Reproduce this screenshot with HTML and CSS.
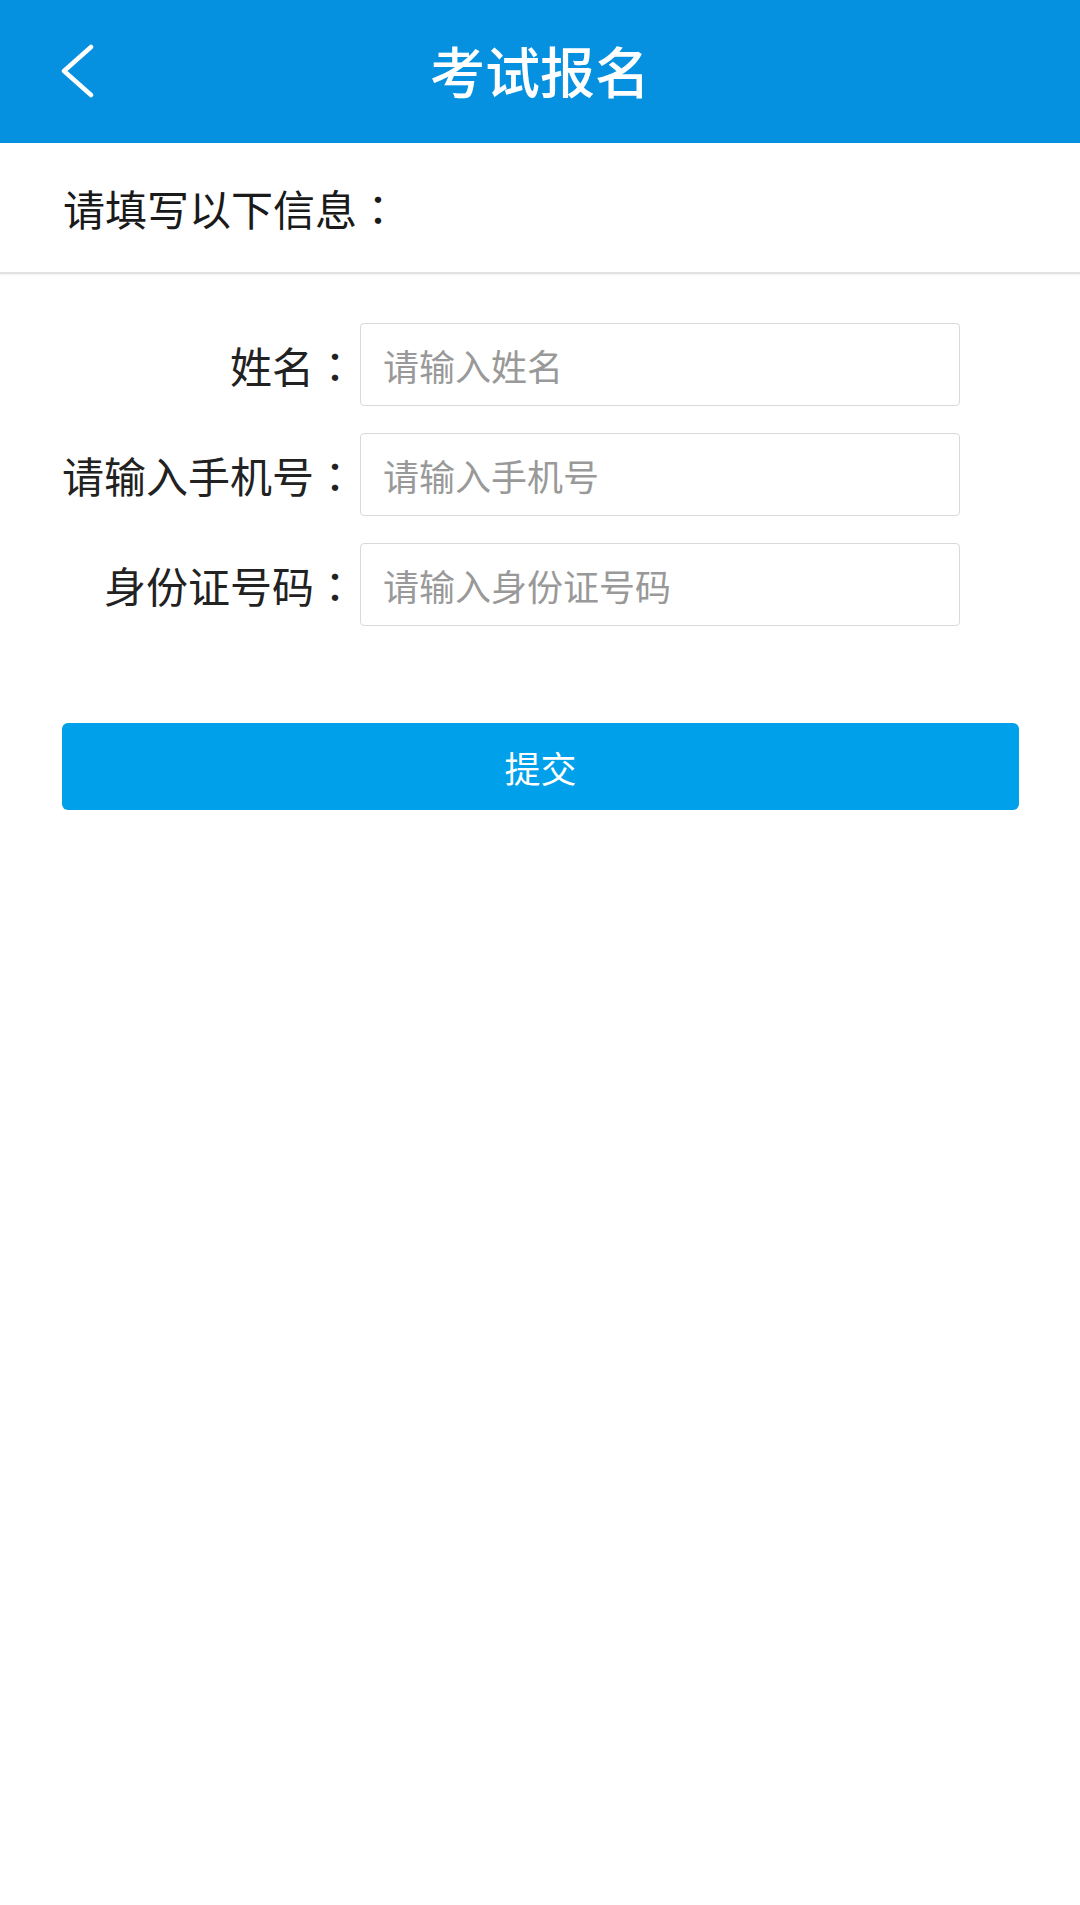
FILE: index.html
```html
<!DOCTYPE html>
<html lang="zh-CN">
<head>
  <meta charset="UTF-8">
  <meta name="viewport" content="width=device-width, initial-scale=1.0">
  <title>考试报名</title>
  <link rel="stylesheet" href="styles.css">
</head>
<body>
  <header class="top-bar">
    <a class="back-btn" href="#">
      <svg width="34" height="54" viewBox="0 0 34 54">
        <polyline points="30,3 3,27 30,51" fill="none" stroke="#fff" stroke-width="4.5" stroke-linecap="round" stroke-linejoin="round"/>
      </svg>
    </a>
    <h1 class="title">考试报名</h1>
    <span></span>
  </header>

  <div class="intro">请填写以下信息<span class="colon">：</span></div>

  <form class="sign-form" onsubmit="return false">
    <div class="form-row">
      <label for="name">姓名<span class="colon">：</span></label>
      <input id="name" type="text" placeholder="请输入姓名">
    </div>
    <div class="form-row">
      <label for="phone">请输入手机号<span class="colon">：</span></label>
      <input id="phone" type="text" placeholder="请输入手机号">
    </div>
    <div class="form-row">
      <label for="idcard">身份证号码<span class="colon">：</span></label>
      <input id="idcard" type="text" placeholder="请输入身份证号码">
    </div>
    <button type="submit" class="submit-btn">提交</button>
  </form>
</body>
</html>
```

FILE: styles.css
```css
body {
  margin: 0;
  padding: 0;
  background: #fff;
  font-family: "Noto Sans CJK SC", "Noto Sans", sans-serif;
  color: #222;
  text-spacing-trim: space-all;
}

.top-bar {
  height: 143px;
  background-color: #0590e0;
  display: grid;
  grid-template-columns: 1fr auto 1fr;
  align-items: center;
}

.back-btn {
  display: flex;
  align-items: center;
  padding-left: 61px;
  margin-top: -2px;
}

.title {
  margin: 0;
  color: #fff;
  font-size: 55px;
  font-weight: 500;
  line-height: 1;
  margin-top: -4px;
}

.intro {
  height: 129px;
  display: flex;
  align-items: center;
  padding-left: 63px;
  font-size: 42px;
  color: #1a1a1a;
  border-bottom: 2px solid #e2e2e2;
  box-shadow: 0 1px 2px rgba(0, 0, 0, 0.06);
}

/* full-width colon centred in its cell, as on the device */
.colon {
  display: inline-block;
  width: 1em;
  text-align: center;
  font-family: "Noto Sans CJK JP", sans-serif;
}

.sign-form {
  padding: 49px 61px 0 62px;
  display: flex;
  flex-direction: column;
  gap: 27px;
}

.form-row {
  display: flex;
  align-items: center;
  gap: 4px;
}

.form-row label {
  width: 294px;
  text-align: right;
  font-size: 42px;
  color: #222;
  white-space: nowrap;
}

.form-row input {
  width: 600px;
  height: 83px;
  box-sizing: border-box;
  border: 1px solid #d9d9d9;
  border-radius: 4px;
  padding: 0 22px;
  font-family: inherit;
  font-size: 36px;
  color: #333;
  outline: none;
}

.form-row input::placeholder {
  color: #999;
}

.submit-btn {
  margin-top: 70px;
  width: 100%;
  height: 87px;
  border: none;
  border-radius: 6px;
  background-color: #00a0ea;
  color: #fff;
  font-family: inherit;
  font-size: 36px;
  cursor: pointer;
}
```
